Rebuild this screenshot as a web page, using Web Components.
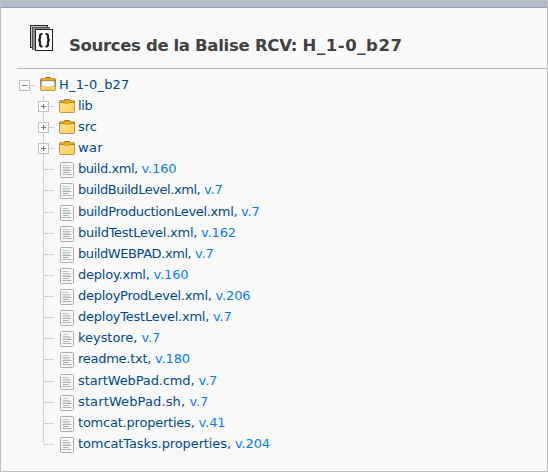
<!DOCTYPE html>
<html lang="fr"><head><meta charset="utf-8"><title>Sources</title>
<style>html,body{margin:0;height:100%;background:#f9f9f9}</style></head><body>
<source-page></source-page>
<script>
// Text run whose letter-spacing is adjusted to occupy a given advance width.
class FitText extends HTMLElement{
  connectedCallback(){
    this.attachShadow({mode:'open'}).innerHTML='<style>:host{display:inline-block;white-space:pre}span{display:inline-block}</style><span><slot></slot></span>';
    const s=this.shadowRoot.querySelector('span'),w=+this.getAttribute('w'),n=this.textContent.length;
    s.style.letterSpacing=((w-s.getBoundingClientRect().width)/n)+'px';
  }
}
class TreeIcon extends HTMLElement{
  connectedCallback(){
    const k=this.getAttribute('kind');
    const art={
    code:`<svg width="24" height="27" shape-rendering="crispEdges"><path fill="#c8c8c8" stroke="#222" d="M.5.5h17v22h-17z"/><path fill="#a0a0a0" stroke="#555" d="M2.5 2.5h17v22h-17z"/><path fill="#909090" d="M3 3h17v22H3z"/><path fill="#fafafa" stroke="#222" d="M5.5 4.5h17v21h-17z"/><g fill="none" stroke="#222" stroke-width="2.2" shape-rendering="auto"><path d="M12.5 9h-.5q-2 0-2 2v2q0 2-2 2 2 0 2 2v2.500q0 2 2 2h.5M15.500 9h.5q2 0 2 2v2q0 2 2 2-2 0-2 2v2.500q0 2-2 2h-.5"/></g></svg>`,
    minus:`<svg width="11" height="11" shape-rendering="crispEdges"><path fill="#fff" stroke="#c1c1c1" d="M.5.5h10v10H.5z"/><path stroke="#777" d="M3 5.5h5"/></svg>`,
    plus:`<svg width="11" height="11" shape-rendering="crispEdges"><path fill="#fff" stroke="#c1c1c1" d="M.5.5h10v10H.5z"/><path stroke="#777" d="M3 5.5h5M5.5 3v5"/></svg>`,
    folder:`<svg width="16" height="14"><defs><linearGradient id="g" x2="1" y2="1"><stop stop-color="#ffe594"/><stop offset="1" stop-color="#fccf58"/></linearGradient></defs><rect x=".5" y="2" width="15" height="11.5" rx="1" fill="url(#g)" stroke="#b8964a"/><path fill="#a17a2c" d="M1 1.500h4L5.500 0h5L11 1.500h4l1 1V4H0V2.500z"/><path fill="#e9a918" d="M1 2h4.500L6 1h4l.5 1H15v1.200h-4L10.300 5H5.700L5 3.200H1z"/></svg>`,
    open:`<svg width="16" height="14"><rect x=".5" y="2" width="15" height="11.5" rx="1" fill="#fbd25f" stroke="#b8964a"/><path fill="#a17a2c" d="M1 1.500h4L5.500 0h5L11 1.500h4l1 1V4H0V2.500z"/><path fill="#e9a918" d="M1 2h4.500L6 1h4l.5 1H15v1H1z"/><path fill="#fff" stroke="#8b8374" stroke-width=".7" d="M1.400 3.700h13.200v5.500h-3l-1.500 1H5.900l-1.500-1h-3z"/><path fill="#ffd968" d="M1 9.400h3.300L6 10.800h4l1.700-1.400H15V13H1z"/></svg>`,
    file:`<svg width="14" height="16"><rect x=".5" y=".5" width="13" height="15" rx="1" fill="#f8f8f6" stroke="#aeaba0"/><path fill="none" stroke="#bbb" stroke-width=".9" d="M2.500 3.500h6M2.500 5.500h8M3 7h7"/><path fill="none" stroke="#aaa" stroke-width="1.200" stroke-dasharray="3 .3 2 .2" d="M2.500 8.500h9M3 10.500h6M2.500 12.500h9"/></svg>`};
    this.attachShadow({mode:'open'}).innerHTML='<style>:host,svg{display:block}</style>'+art[k];
  }
}
class TreeRow extends HTMLElement{
  connectedCallback(){
    const a=n=>this.getAttribute(n),kind=a('kind'),root=kind==='open',file=kind==='file';
    this.attachShadow({mode:'open'}).innerHTML=`<style>
    :host{display:grid;grid-template-columns:21px 19px 1fr;height:21.125px;box-sizing:border-box;align-items:start;padding-left:${root?0:19}px;color:#004a8b}
    .toggle{display:grid;grid-template-columns:11px 5px;align-items:center;height:21px}
    .toggle.leaf{grid-template-columns:5px 11px}
    .toggle i{height:1px;background:#d0d0d0}
    .branch{display:grid;height:100%;background:linear-gradient(#cfcfcf,#cfcfcf) 5px 0/1px ${a('last')!==null?'9px':'100%'} no-repeat}
    .root{background:none}
    .icon{padding-top:${root?2:3}px;padding-left:${file?1:0}px}
    .text{line-height:17px;white-space:pre;padding-top:1px}
    .version{color:#087cf8}</style>
    <div class="branch ${root?'root':''}"><div class="toggle ${file?'leaf':''}">${file?'<b></b><i></i>':`<tree-icon kind="${root?'minus':'plus'}"></tree-icon><i></i>`}</div></div>
    <div class="icon"><tree-icon kind="${kind}"></tree-icon></div>
    <div class="text"><fit-text w="${a('w')}">${a('name')}${file?', ':''}</fit-text>${file?`<fit-text class="version" w="${a('vw')}">${a('v')}</fit-text>`:''}</div>`;
  }
}
class SourceTree extends HTMLElement{
  connectedCallback(){
    const rows=[['H_1-0_b27',70.5,'open'],['lib',14.5,'folder'],['src',19,'folder'],['war',25,'folder'],
    ['build.xml',63.5,'v.160'],['buildBuildLevel.xml',126,'v.7'],['buildProductionLevel.xml',163,'v.7'],['buildTestLevel.xml',123,'v.162'],['buildWEBPAD.xml',117,'v.7'],['deploy.xml',75.5,'v.160'],['deployProdLevel.xml',137.5,'v.206'],['deployTestLevel.xml',135,'v.7'],['keystore',63.5,'v.7'],['readme.txt',77,'v.180'],['startWebPad.cmd',120.5,'v.7'],['startWebPad.sh',111.5,'v.7'],['tomcat.properties',120.5,'v.41'],['tomcatTasks.properties',157,'v.204']];
    this.attachShadow({mode:'open'}).innerHTML='<style>:host{display:block;padding:5.8px 0 0 2px;font:13px "DejaVu Sans",sans-serif}</style>'+rows.map(([n,w,k],i)=>`<tree-row name="${n}" w="${w}" ${i<4?`kind="${k}"`:`kind="file" v="${k}" vw="${k.length===3?18.5:k.length===4?27:35}"`} ${i===17?'last':''}></tree-row>`).join('');
  }
}
class SourcePage extends HTMLElement{
  connectedCallback(){
    this.attachShadow({mode:'open'}).innerHTML=`<style>
    :host{display:block;box-sizing:border-box;width:548px;height:472px;border:1px solid #bfbfbf;background:#f9f9f9;overflow:hidden}
    .bar{height:6px;background:#b5bdcb;border-bottom:1px solid #949dab}
    main{padding-left:16px}
    header{display:flex;box-sizing:border-box;height:61px;border-bottom:1px solid #b9b9bb;padding:17px 0 0 13px;gap:15px}
    h1{margin:9px 0 0;white-space:nowrap;font:bold 16.5px/24px "DejaVu Sans",sans-serif;color:#414141}</style>
    <div class="bar"></div><main><header><tree-icon kind="code"></tree-icon><h1><fit-text w="77">Sources </fit-text><fit-text w="27.5">de </fit-text><fit-text w="21.5">la </fit-text><fit-text w="60">Balise </fit-text><fit-text w="47.5">RCV: </fit-text><fit-text w="100">H_1-0_b27</fit-text></h1></header><source-tree></source-tree></main>`;
  }
}
customElements.define('fit-text',FitText);customElements.define('tree-icon',TreeIcon);customElements.define('tree-row',TreeRow);customElements.define('source-tree',SourceTree);customElements.define('source-page',SourcePage);
</script></body></html>
